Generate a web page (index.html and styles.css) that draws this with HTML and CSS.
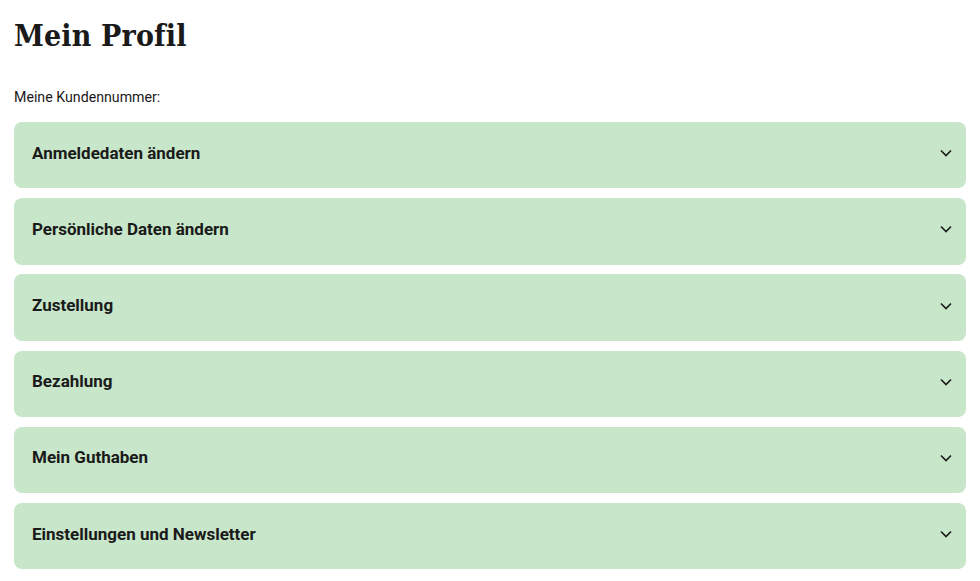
FILE: index.html
```html
<!DOCTYPE html>
<html lang="de">
<head>
<meta charset="utf-8">
<title>Mein Profil</title>
<link rel="stylesheet" href="styles.css">
</head>
<body>
<main class="page">
  <h1 class="title">Mein Profil</h1>
  <p class="customer">Meine Kundennummer:</p>
  <div class="accordion">
    <div class="item"><span class="label">Anmeldedaten ändern</span><svg class="chev" viewBox="0 0 12 8" width="12" height="8"><path d="M1 1.5l5 5 5-5" fill="none" stroke="#1a1a1a" stroke-width="1.6"/></svg></div>
    <div class="item"><span class="label">Persönliche Daten ändern</span><svg class="chev" viewBox="0 0 12 8" width="12" height="8"><path d="M1 1.5l5 5 5-5" fill="none" stroke="#1a1a1a" stroke-width="1.6"/></svg></div>
    <div class="item"><span class="label">Zustellung</span><svg class="chev" viewBox="0 0 12 8" width="12" height="8"><path d="M1 1.5l5 5 5-5" fill="none" stroke="#1a1a1a" stroke-width="1.6"/></svg></div>
    <div class="item"><span class="label">Bezahlung</span><svg class="chev" viewBox="0 0 12 8" width="12" height="8"><path d="M1 1.5l5 5 5-5" fill="none" stroke="#1a1a1a" stroke-width="1.6"/></svg></div>
    <div class="item"><span class="label">Mein Guthaben</span><svg class="chev" viewBox="0 0 12 8" width="12" height="8"><path d="M1 1.5l5 5 5-5" fill="none" stroke="#1a1a1a" stroke-width="1.6"/></svg></div>
    <div class="item"><span class="label">Einstellungen und Newsletter</span><svg class="chev" viewBox="0 0 12 8" width="12" height="8"><path d="M1 1.5l5 5 5-5" fill="none" stroke="#1a1a1a" stroke-width="1.6"/></svg></div>
  </div>
</main>
</body>
</html>
```
FILE: styles.css
```css
html, body {
  margin: 0;
  padding: 0;
  background: #ffffff;
}
body {
  font-family: Roboto, "Noto Sans", sans-serif;
  color: #1a1a1a;
}
.page {
  padding: 14px 14px 0 14px;
}
.title {
  margin: 0;
  font-family: "DejaVu Serif Condensed", "DejaVu Serif", serif;
  font-weight: 700;
  font-size: 30px;
  line-height: 44px;
  letter-spacing: 0.15px;
  color: #1a1a1a;
}
.customer {
  margin: 29px 0 0 0;
  font-size: 14.2px;
  line-height: 20px;
}
.accordion {
  margin-top: 15px;
  display: flex;
  flex-direction: column;
  gap: 9.8px;
}
.item {
  height: 66.4px;
  box-sizing: border-box;
  background: #c8e6c9;
  border-radius: 8px;
  display: flex;
  align-items: center;
  justify-content: space-between;
  padding: 0 14px 5px 18px;
}
.label {
  font-size: 17px;
  font-weight: 700;
  color: #1a1a1a;
}
.chev {
  display: block;
  margin-top: 1px;
}
```
